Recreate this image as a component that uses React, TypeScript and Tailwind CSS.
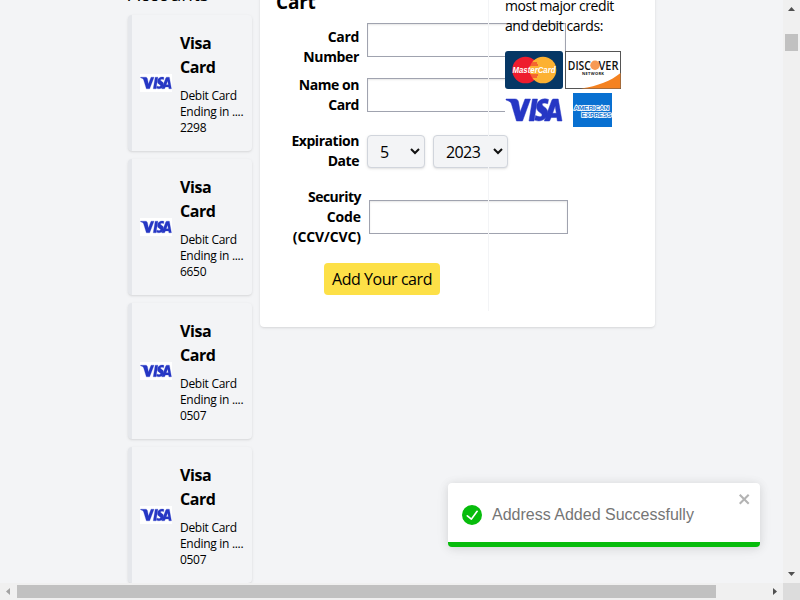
import type { ReactNode } from "react";

const ui = "font-['Open_Sans','Noto_Sans',sans-serif]";

function VisaLogo({ className }: { className: string }) {
  return (
    <svg viewBox="0 0 58 34" className={className} preserveAspectRatio="none">
      <rect width="58" height="34" fill="#fff" />
      <g fill="#2637c4" stroke="#2637c4" strokeWidth=".5">
        <path d="M1 6h9c2 0 3 1 3.500 3l1.700 10L20 6H25.500L17.500 28h-6L6.500 11C6 9 4 8 1 7z" />
        <path d="M27.500 6h5L29 28h-5z" />
        <path d="M43.500 6.500l-.8 4.300c-2.300-1-5.500-1.200-5.500 .7 0 2.200 5.500 2.800 5.500 8.100 0 6.500-7.200 10-13 7.500l.9-4.500c3 1.500 6.500 1.600 6.500-.7 0-2.200-5.500-2.700-5.500-7.900 0-6.500 6.400-9.700 11.900-7.500z" />
        <path fillRule="evenodd" d="M48.500 6h4.700L57 28h-4.600l-.6-3.500h-5.600L44.500 28h-5.200l7.400-20.400C47.100 6.500 47.600 6 48.500 6zM50.200 13l-2.600 7.300h3.700z" />
      </g>
    </svg>
  );
}

function MasterCardLogo() {
  return (
    <svg viewBox="0 0 58 38" className="h-[38px] w-[58px]">
      <rect width="58" height="38" rx="3" fill="#063765" />
      <circle cx="20.500" cy="19" r="13.300" fill="#ee1c2e" />
      <circle cx="38" cy="19" r="13.300" fill="#fcb131" />
      <path d="M25 14h8M25 12h7M25 24h8M26 26h6" stroke="#ee1c2e" strokeWidth="1" />
      <text x="7.500" y="22.200" textLength="43" lengthAdjust="spacingAndGlyphs" fill="#fff" fontSize="8.500" fontWeight="bold" fontStyle="italic" fontFamily="Liberation Sans, sans-serif">MasterCard</text>
    </svg>
  );
}

function DiscoverLogo() {
  return (
    <svg viewBox="0 0 56 38" className="h-[38px] w-14">
      <rect x=".5" y=".5" width="55" height="37" fill="#fff" stroke="#555" />
      <path d="M16 37.500C33 35 46 30 55.500 22V37.500z" fill="#f58220" />
      <circle cx="30" cy="14.300" r="4.700" fill="#f79a55" />
      <g fontFamily="Open Sans, sans-serif" fill="#111">
        <text x="2.800" y="18.600" textLength="23" lengthAdjust="spacingAndGlyphs" fontSize="12.200" fontWeight="600">DISC</text>
        <text x="33.500" y="18.600" textLength="20" lengthAdjust="spacingAndGlyphs" fontSize="12.200" fontWeight="600">VER</text>
        <text x="17" y="24.300" textLength="22" fontSize="4" fontWeight="700">NETWORK</text>
      </g>
    </svg>
  );
}

function AmexLogo() {
  return (
    <svg viewBox="0 0 56 38" className="h-[38px] w-14">
      <rect width="56" height="38" fill="#fff" />
      <rect x="8" y="2" width="39" height="34" fill="#0870d1" />
      <g fontFamily="Liberation Sans, sans-serif" fontWeight="bold" fontSize="6.200" fill="#0870d1" stroke="#fff" strokeWidth="1.600" paintOrder="stroke">
        <text x="9" y="18.500" textLength="35" lengthAdjust="spacingAndGlyphs">AMERICAN</text>
        <text x="16.500" y="25.500" textLength="30" lengthAdjust="spacingAndGlyphs">EXPRESS</text>
      </g>
    </svg>
  );
}

function AccountCard({ digits }: { digits: string }) {
  return (
    <div className="flex h-[136px] items-center gap-2 rounded border-l-4 border-gray-200 bg-gray-100 pl-2 shadow">
      <VisaLogo className="h-[18px] w-8 shrink-0" />
      <div className="pt-px">
        <p className="text-base font-bold tracking-[-0.45px]">Visa<br />Card</p>
        <p className="mt-[9px] text-xs leading-4 whitespace-nowrap tracking-[-0.3px]">Debit Card<br />Ending in ....<br />{digits}</p>
      </div>
    </div>
  );
}

function Field({ label, row, labelBox, inputBox }: { label: ReactNode; row: string; labelBox: string; inputBox: string }) {
  return (
    <div className={"flex gap-2 " + row}>
      <label className={"shrink-0 text-right text-sm font-bold " + labelBox}>{label}</label>
      <input className={"h-[34px] w-[199px] shrink-0 border border-[#a0a3af] bg-white shadow-[inset_0_1px_2px_#0000001a] " + inputBox} />
    </div>
  );
}

function Picker({ value, className }: { value: string; className: string }) {
  return (
    <button className={"flex h-[33px] items-center justify-between rounded border border-gray-300 bg-gray-100 pr-1 pl-3 shadow-sm " + className}>
      <span className="pt-0.5 tracking-[-0.6px]">{value}</span>
      <svg viewBox="0 0 10 7" className="h-[7px] w-2.5" fill="none" stroke="#111" strokeWidth="2"><path d="M1 1l4 4 4-4" /></svg>
    </button>
  );
}

export default function App() {
  return (
    <div className={"relative grid h-[600px] w-[800px] grid-cols-[783px_17px] grid-rows-[583px_17px] overflow-hidden bg-gray-100 text-black " + ui}>
      <main className="flex items-start gap-2 overflow-hidden pl-32">
        <section className="-mt-[19px] flex w-[124px] shrink-0 flex-col gap-2">
          <h2 className="h-[26px] text-[19px] leading-[27px] font-medium whitespace-nowrap">Accounts</h2>
          <AccountCard digits="2298" />
          <AccountCard digits="6650" />
          <AccountCard digits="0507" />
          <AccountCard digits="0507" />
        </section>

        <section className="-mt-7 flex h-[355px] w-[395px] shrink-0 rounded bg-white p-4 shadow">
          <div className="w-[212px] shrink-0">
            <h2 className="h-[35px] text-[19px] leading-[28px] font-bold tracking-[-0.2px]">Cart</h2>
            <Field label={<>Card<br />Number</>} row="h-11 items-start" labelBox="w-[83px] pt-1 tracking-[-0.35px]" inputBox="" />
            <Field label={<>Name on<br />Card</>} row="mt-2 h-10 items-start" labelBox="w-[83px] tracking-[-0.45px]" inputBox="mt-[3px]" />
            <div className="mt-4 flex h-10 items-center gap-2">
              <span className="w-[83px] shrink-0 text-right text-sm font-bold tracking-[-0.45px]">Expiration<br />Date</span>
              <Picker value="5" className="w-[58px] shrink-0" />
              <Picker value="2023" className="w-[75px] shrink-0" />
            </div>
            <Field label={<><span className="tracking-[-0.5px]">Security</span><br />Code<br />(CCV/CVC)</>} row="mt-4 h-[60px] items-center" labelBox="w-[85px] tracking-[-0.1px]" inputBox="" />
            <button className="mt-4 ml-12 h-8 w-[116px] rounded bg-[#fde047] text-base whitespace-nowrap tracking-[-0.45px]">Add Your card</button>
          </div>
          <aside className="relative w-[151px] border-l border-gray-100 pl-4">
            <p className="mt-2 text-sm leading-5 whitespace-nowrap tracking-[-0.43px]">most major credit<br />and debit cards:</p>
            <div className="mt-[15px] grid w-[116px] grid-cols-[58px_56px] items-center gap-x-0.5 gap-y-0.5 bg-white">
              <MasterCardLogo />
              <DiscoverLogo />
              <VisaLogo className="h-[34px] w-[58px]" />
              <AmexLogo />
            </div>
          </aside>
        </section>
      </main>

      <div className="flex flex-col items-center justify-between bg-[#f0f0f0] py-[7px]">
        <div className="flex flex-col items-center gap-[23px]">
          <svg className="h-1 w-[7px]" viewBox="0 0 7 4"><path d="M0 4L3.500 0 7 4z" fill="#505050" /></svg>
          <div className="h-[17px] w-[13px] bg-[#c1c1c1]" />
        </div>
        <svg className="h-1 w-[7px]" viewBox="0 0 7 4"><path d="M0 0h7L3.500 4z" fill="#505050" /></svg>
      </div>
      <div className="flex items-center bg-[#f0f0f0] pr-1.5 pl-1.5">
        <svg className="h-[7px] w-1" viewBox="0 0 4 7"><path d="M4 0v7L0 3.500z" fill="#a3a3a3" /></svg>
        <div className="ml-[7px] h-[13px] w-[699px] bg-[#c1c1c1]" />
        <svg className="ml-auto h-[7px] w-1" viewBox="0 0 4 7"><path d="M0 0l4 3.500L0 7z" fill="#505050" /></svg>
      </div>
      <div className="bg-[#dcdcdc]" />

      <div className="absolute top-[483px] left-[448px] flex h-16 w-[312px] items-center overflow-hidden rounded border-b-[5px] border-[#07bc0c] bg-white pt-1 pl-3.5 shadow-[0_1px_10px_#0000001a,0_2px_15px_#0000000d]">
        <svg viewBox="0 0 24 24" className="h-5 w-5" fill="#07bc0c"><path d="M12 0a12 12 0 1012 12A12.014 12.014 0 0012 0zm6.927 8.200l-6.845 9.289a1.011 1.011 0 01-1.430.188l-4.888-3.908a1 1 0 111.250-1.562l4.076 3.261 6.227-8.451a1 1 0 111.610 1.183z" /></svg>
        <span className="ml-2.5 font-['Liberation_Sans',sans-serif] text-base whitespace-nowrap text-[#757575]">Address Added Successfully</span>
        <svg viewBox="0 0 14 16" className="mb-8 ml-auto mr-2 h-4 w-3.5 fill-[#b3b3b3]"><path fillRule="evenodd" d="M7.710 8.230l3.750 3.750-1.480 1.480-3.750-3.750-3.750 3.750L1 11.980l3.750-3.750L1 4.480 2.480 3l3.750 3.750L9.980 3l1.480 1.480-3.750 3.750z" /></svg>
      </div>
    </div>
  );
}
